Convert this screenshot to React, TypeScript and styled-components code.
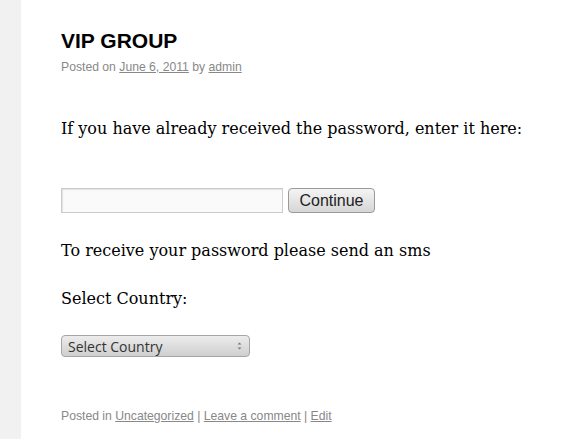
import React from "react";
import styled, { createGlobalStyle } from "styled-components";

const Global = createGlobalStyle`
  html, body { margin: 0; padding: 0; background: #fff; }
  body { font-family: "DejaVu Serif", Georgia, serif; color: #000; }
`;

const Page = styled.div`
  display: flex;
  min-height: 439px;
`;

const Gutter = styled.div`
  width: 21px;
  flex: none;
  background: #f1f1f1;
`;

const Content = styled.main`
  flex: 1;
  padding: 29px 0 0 40px;
`;

const Title = styled.h1`
  margin: 0;
  font-family: "Liberation Sans", Arial, sans-serif;
  font-weight: bold;
  font-size: 21px;
  line-height: 24px;
  color: #000;
`;

const Meta = styled.div`
  margin-top: 5px;
  font-family: "Liberation Sans", Arial, sans-serif;
  font-size: 12.2px;
  line-height: 18px;
  color: #888;
  a { color: #888; text-decoration: underline; }
`;

const Para = styled.p<{ $top: number }>`
  margin: ${(p) => p.$top}px 0 0;
  font-size: 16px;
  line-height: 24px;
`;

const FormRow = styled.div`
  display: flex;
  align-items: center;
  gap: 5px;
  margin-top: 47px;
`;

const TextInput = styled.input`
  box-sizing: border-box;
  width: 222px;
  height: 25px;
  border: 1px solid #ccc;
  background: #fafafa;
  box-shadow: inset 1px 1px 1px rgba(0, 0, 0, 0.1);
  padding: 2px;
  margin: 0;
`;

const Button = styled.button`
  box-sizing: border-box;
  width: 87px;
  height: 25px;
  border: 1px solid #9a9a9a;
  border-radius: 4px;
  background: linear-gradient(#f4f4f4, #d6d6d6);
  font-family: "Liberation Sans", Arial, sans-serif;
  font-size: 16px;
  color: #222;
  padding: 0;
  margin: 0;
`;

const SelectBox = styled.div`
  margin-top: 24px;
  box-sizing: border-box;
  width: 189px;
  height: 22px;
  border: 1px solid #a6a6a6;
  border-radius: 4px;
  background: linear-gradient(#ececec, #cfcfcf);
  display: flex;
  align-items: center;
  justify-content: space-between;
  padding: 0 6px 0 6px;
  font-family: "Open Sans", "DejaVu Sans", sans-serif;
  font-size: 14px;
  color: #333;
`;

const Arrows = styled.svg`
  width: 7px;
  height: 12px;
`;

const Footer = styled.div`
  margin-top: 50px;
  font-family: "Liberation Sans", Arial, sans-serif;
  font-size: 12.2px;
  line-height: 18px;
  color: #888;
  a { color: #888; text-decoration: underline; }
`;

export default function App() {
  return (
    <>
      <Global />
      <Page>
        <Gutter />
        <Content>
          <Title>VIP GROUP</Title>
          <Meta>
            Posted on <a href="#">June 6, 2011</a> by <a href="#">admin</a>
          </Meta>
          <Para $top={41}>If you have already received the password, enter it here:</Para>
          <FormRow>
            <TextInput type="password" />
            <Button>Continue</Button>
          </FormRow>
          <Para $top={26}>To receive your password please send an sms</Para>
          <Para $top={24}>Select Country:</Para>
          <SelectBox>
            <span>Select Country</span>
            <Arrows viewBox="0 0 7 12">
              <path d="M1.5 4.5 L3.5 2.5 L5.5 4.5 Z" fill="#777" />
              <path d="M1.5 7.5 L3.5 9.5 L5.5 7.5 Z" fill="#777" />
            </Arrows>
          </SelectBox>
          <Footer>
            Posted in <a href="#">Uncategorized</a> | <a href="#">Leave a comment</a> | <a href="#">Edit</a>
          </Footer>
        </Content>
      </Page>
    </>
  );
}
